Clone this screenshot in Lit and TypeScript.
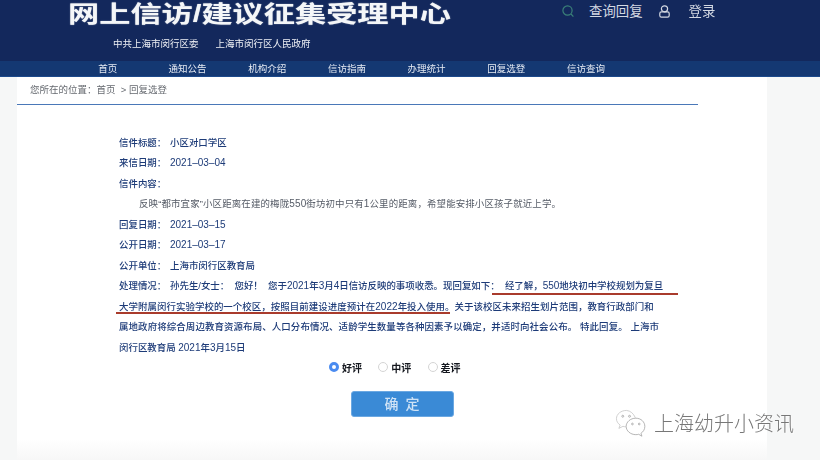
import { LitElement, html, css } from "lit";
import { customElement } from "lit/decorators.js";

const NAV = ["首页", "通知公告", "机构介绍", "信访指南", "办理统计", "回复选登", "信访查询"];

const runs = (text: string) =>
  text.split(/([0-9]+(?:–[0-9]+)*)/).map((part, i) => (i % 2 ? html`<span class="num">${part}</span>` : part));

@customElement("app-root")
export class AppRoot extends LitElement {
  static styles = css`
    :host {
      display: block;
      position: relative;
      width: 820px;
      height: 460px;
      overflow: hidden;
      background: #f6f7f7;
      font-family: "Liberation Sans", "Noto Sans CJK SC", sans-serif;
    }
    .shot {
      width: 820px;
      height: 460px;
      filter: blur(0.35px);
    }
    .header {
      height: 61px;
      background: #13285c;
      display: flex;
      flex-direction: column;
      padding-left: 68px;
      box-sizing: border-box;
    }
    .top {
      height: 29px;
      display: flex;
    }
    .title-box {
      width: 382px;
      height: 29px;
      flex: none;
    }
    .title {
      display: inline-block;
      white-space: nowrap;
      font-size: 23px;
      line-height: 29px;
      font-weight: 700;
      color: #f4f6f8;
      text-shadow: 0 0 1px rgba(255, 255, 255, 0.7);
      transform: scaleX(1.356);
      transform-origin: left center;
    }
    .tools {
      margin-left: 112px;
      height: 21px;
      display: flex;
      align-items: center;
      color: #d3d8e2;
      font-size: 13.4px;
    }
    .tools svg { display: block; flex: none; margin-top: 2px; }
    .tool-text { margin-left: 15px; margin-bottom: 2px; white-space: nowrap; }
    .tools .user { margin-left: 16px; }
    .tools .login { margin-left: 19px; }
    .units {
      margin-top: 7px;
      padding-left: 45px;
      display: flex;
      gap: 17px;
      color: #eef0f5;
      font-size: 9.5px;
      line-height: 16px;
      white-space: nowrap;
    }
    .nav {
      height: 16px;
      background: #143872;
      border-bottom: 1px solid #1c4a8c;
      box-sizing: border-box;
      display: flex;
      padding-left: 68px;
    }
    .nav span {
      width: 79.7px;
      text-align: center;
      color: #e6ebf3;
      font-size: 9.5px;
      line-height: 15px;
      white-space: nowrap;
    }
    .page {
      margin-left: 17px;
      width: 750px;
      height: 383px;
      background: linear-gradient(#fff 0, #fff 362px, #f7f7f7 383px);
      display: flex;
      flex-direction: column;
    }
    .crumb {
      width: 681px;
      height: 28px;
      box-sizing: border-box;
      border-bottom: 1px solid #4a78b8;
      padding-left: 13px;
      font-size: 9.5px;
      line-height: 26px;
      color: #666a70;
      white-space: pre;
    }
    .body {
      padding: 27.5px 0 0 102px;
      color: #1d3b78;
      font-size: 9.45px;
      line-height: 20.5px;
      white-space: nowrap;
      font-weight: 500;
    }
    .num { font-size: 10px; }
    .row { display: flex; height: 20.5px; }
    .label { width: 51px; flex: none; }
    .value { white-space: pre; }
    .plain { display: block; }
    .l2 { letter-spacing: 0.05px; }
    .l3 { letter-spacing: 0.11px; }
    .gist { padding-left: 20px; color: #555b66; font-weight: 400; letter-spacing: 0.14px; }
    .rates {
      padding-left: 312px;
      height: 18px;
      display: flex;
      align-items: center;
      font-size: 10px;
      color: #15181f;
      font-weight: 700;
      white-space: nowrap;
    }
    .rate { display: flex; align-items: center; width: 49.3px; }
    .radio {
      width: 10px;
      height: 10px;
      box-sizing: border-box;
      border: 1px solid #d4d4d4;
      border-radius: 50%;
      background: #fff;
      margin-right: 3px;
      flex: none;
    }
    .radio.on {
      border: 3px solid #4a8bf0;
    }
    .btn-row { padding: 14.5px 0 0 334px; }
    .btn {
      width: 103px;
      height: 26px;
      border-radius: 3px;
      background: #3a8ad6;
      border: 1px solid #6ba8e2;
      box-sizing: border-box;
      color: #cfe3f6;
      font-size: 14px;
      font-weight: 500;
      letter-spacing: 7px;
      text-align: center;
      line-height: 24px;
      padding-left: 6px;
    }
    .mark {
      position: absolute;
      height: 2px;
      background: #a93b2c;
    }
    .m1 { left: 492px; top: 293px; width: 186px; }
    .m2 { left: 116px; top: 312px; width: 334px; }
    .wm {
      position: absolute;
      left: 615px;
      top: 409px;
      display: flex;
      align-items: center;
      gap: 8px;
      color: #777;
      font-size: 20px;
      font-weight: 300;
      line-height: 30px;
      white-space: nowrap;
      text-shadow: 1px 1px 0 rgba(255, 255, 255, 0.6);
    }
    .wm svg { display: block; }
  `;

  render() {
    return html`
      <div class="shot">
        <div class="header">
          <div class="top">
            <div class="title-box"><span class="title">网上信访/建议征集受理中心</span></div>
            <div class="tools">
              <svg width="12" height="13" viewBox="0 0 12 13" fill="none" stroke="#3a8078" stroke-width="1.2">
                <circle cx="5.5" cy="5.5" r="4.6"></circle><path d="M9 9l2.400 2.600"></path>
              </svg>
              <span class="tool-text">查询回复</span>
              <svg class="user" width="11" height="13" viewBox="0 0 11 13" fill="none" stroke="#d3d8e2" stroke-width="1.2">
                <rect x="2.400" y="0.800" width="6.200" height="6" rx="3"></rect>
                <rect x="0.800" y="6.800" width="9.400" height="5.400" rx="1.600"></rect>
              </svg>
              <span class="tool-text login">登录</span>
            </div>
          </div>
          <div class="units">
            <span>中共上海市闵行区委</span><span>上海市闵行区人民政府</span>
          </div>
        </div>
        <div class="nav">${NAV.map((n) => html`<span>${n}</span>`)}</div>
        <div class="page">
          <div class="crumb">您所在的位置：首页  &gt; 回复选登</div>
          <div class="body">
            <div class="row"><span class="label">信件标题：</span><span class="value">小区对口学区</span></div>
            <div class="row"><span class="label">来信日期：</span><span class="value">${runs("2021–03–04")}</span></div>
            <div class="row"><span class="label">信件内容：</span></div>
            <div class="gist">${runs("反映“都市宜家”小区距离在建的梅陇550街坊初中只有1公里的距离，希望能安排小区孩子就近上学。")}</div>
            <div class="row"><span class="label">回复日期：</span><span class="value">${runs("2021–03–15")}</span></div>
            <div class="row"><span class="label">公开日期：</span><span class="value">${runs("2021–03–17")}</span></div>
            <div class="row"><span class="label">公开单位：</span><span class="value">上海市闵行区教育局</span></div>
            <div class="row"><span class="label">处理情况：</span><span class="value">${runs("孙先生/女士：  您好！  您于2021年3月4日信访反映的事项收悉。现回复如下：  经了解，550地块初中学校规划为复旦")}</span></div>
            <div class="plain l2">${runs("大学附属闵行实验学校的一个校区，按照目前建设进度预计在2022年投入使用。关于该校区未来招生划片范围，教育行政部门和")}</div>
            <div class="plain l3">属地政府将综合周边教育资源布局、人口分布情况、适龄学生数量等各种因素予以确定，并适时向社会公布。 特此回复。 上海市</div>
            <div class="plain">${runs("闵行区教育局 2021年3月15日")}</div>
          </div>
          <div class="rates">
            <span class="rate"><span class="radio on"></span>好评</span>
            <span class="rate"><span class="radio"></span>中评</span>
            <span class="rate"><span class="radio"></span>差评</span>
          </div>
          <div class="btn-row"><div class="btn">确定</div></div>
        </div>
      </div>
      <div class="mark m1"></div>
      <div class="mark m2"></div>
      <div class="wm">
        <svg width="31" height="30" viewBox="0 0 32 30" fill="none" stroke="#a0a0a0" stroke-width="0.8">
          <path d="M12 1C6 1 1.500 4.800 1.500 9.500c0 2.800 1.500 5 3.800 6.600L4 19.500l4.200-2.100c1 .3 2 .4 3 .5" stroke="#c4c4c4"></path>
          <path d="M21 8.500C19 4 16 1.500 12 1" stroke="#c4c4c4"></path>
          <path d="M21.500 9C15.900 9 11.500 13 11.500 17.500s4.400 8.500 10 8.500c1 0 2-.1 2.900-.4l3.400 2-1-3c2.500-1.600 4-4.200 4-7.100C30.800 13 27 9 21.500 9z"></path>
          <circle cx="8" cy="7" r="1"></circle><circle cx="15" cy="7" r="1"></circle>
          <circle cx="18" cy="15" r="0.900"></circle><circle cx="25" cy="15" r="0.900"></circle>
        </svg>
        <span>上海幼升小资讯</span>
      </div>
    `;
  }
}
